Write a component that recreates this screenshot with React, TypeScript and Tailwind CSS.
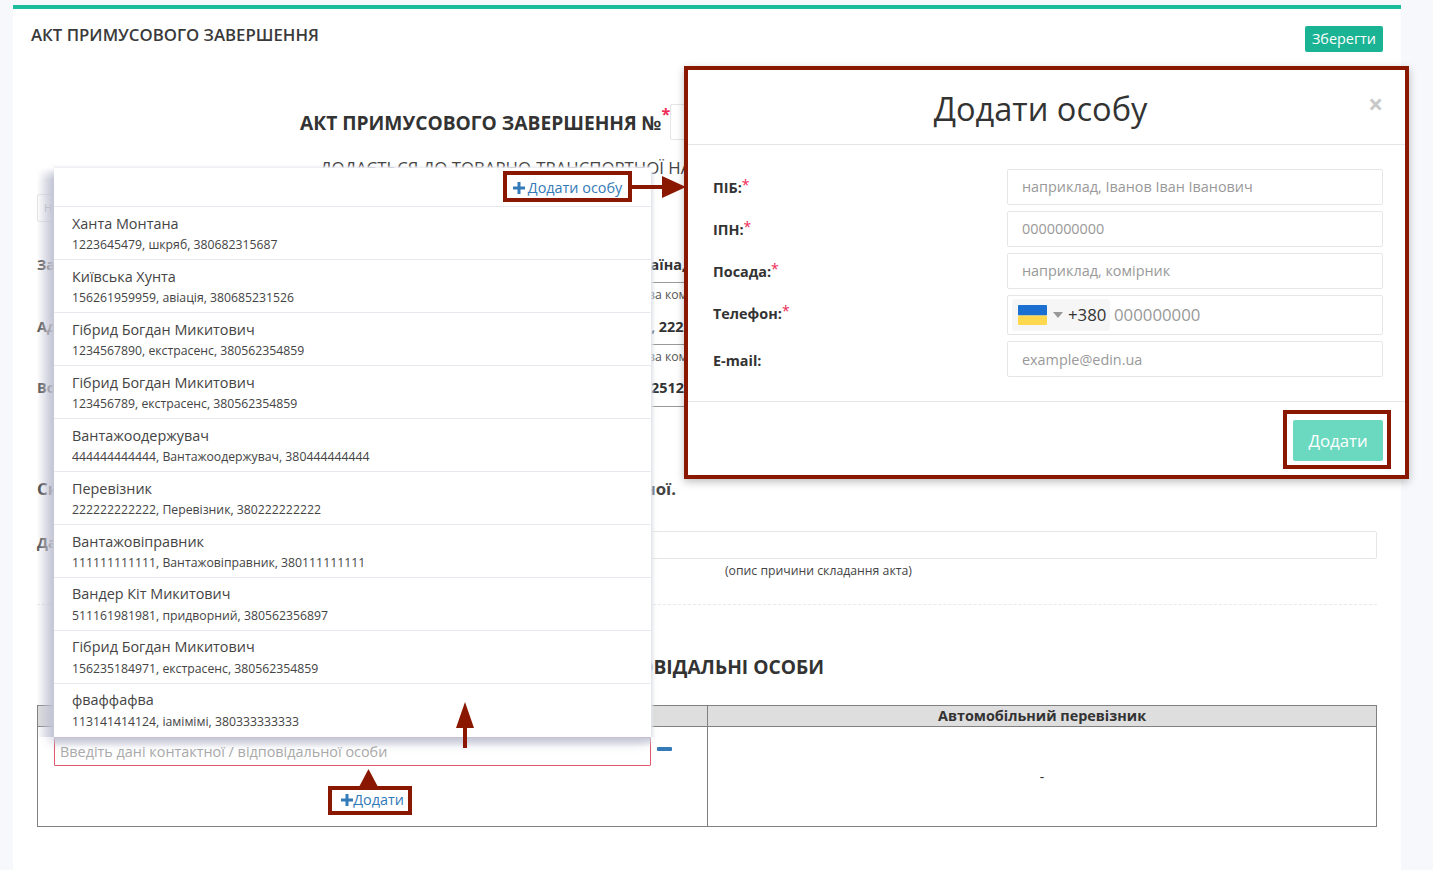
import React from "react";

const people = [
  ["Ханта Монтана", "1223645479, шкряб, 380682315687"],
  ["Київська Хунта", "156261959959, авіація, 380685231526"],
  ["Гібрид Богдан Микитович", "1234567890, екстрасенс, 380562354859"],
  ["Гібрид Богдан Микитович", "123456789, екстрасенс, 380562354859"],
  ["Вантажоодержувач", "444444444444, Вантажоодержувач, 380444444444"],
  ["Перевізник", "222222222222, Перевізник, 380222222222"],
  ["Вантажовіправник", "111111111111, Вантажовіправник, 380111111111"],
  ["Вандер Кіт Микитович", "511161981981, придворний, 380562356897"],
  ["Гібрид Богдан Микитович", "156235184971, екстрасенс, 380562354859"],
  ["фваффафва", "113141414124, іамімімі, 380333333333"],
];

function PlusIcon({ size = 12 }: { size?: number }) {
  return (
    <svg width={size} height={size} viewBox="0 0 12 12" className="shrink-0">
      <path d="M4.5 0h3v4.5H12v3H7.5V12h-3V7.5H0v-3h4.5z" fill="#337ab7" />
    </svg>
  );
}

function Star() {
  return <sup className="text-[#ed2a55] text-[14px] font-normal leading-none relative -top-[3px]">*</sup>;
}

function Field({ label, star, ph, h = "h-[36px]", mb = "mb-[6px]", labelPt = "pt-[9px]", textPad = "pb-[1px]" }: { label: string; star?: boolean; ph: string; h?: string; mb?: string; labelPt?: string; textPad?: string }) {
  return (
    <div className={`flex ${mb}`}>
      <div className={`w-[319px] pl-[25px] text-[14.4px] font-bold text-[#333] leading-[20px] ${labelPt}`}>
        {label}
        {star && <Star />}
      </div>
      <div className={`w-[376px] ${h} border border-[#e5e6e7] rounded-[2px] flex items-center pl-[14px] ${textPad} text-[14.4px] text-[#999]`}>{ph}</div>
    </div>
  );
}

export default function App() {
  return (
    <div className="relative h-[870px] overflow-hidden bg-[#f7f8fb] pl-[13px] pr-[32px] pt-[5px] text-[#333]" style={{ fontFamily: '"Open Sans", sans-serif' }}>
      {/* card */}
      <div className="h-[865px] bg-white border-t-4 border-[#1abc9c]">
        <div className="h-[57px] flex justify-between pl-[18px] pr-[18px]">
          <div className="pt-[15px] text-[16.8px] leading-[22px] font-semibold text-[#3a3a3a]">АКТ ПРИМУСОВОГО ЗАВЕРШЕННЯ</div>
          <div className="mt-[17px] h-[26px] w-[78px] bg-[#1ab394] rounded-[2px] text-white text-[14.4px] pb-[1px] flex items-center justify-center">Зберегти</div>
        </div>

        <div className="px-[24px]">
          <div className="h-[38px] mt-[38px] flex">
            <div className="pl-[263px] pt-[5px] text-[19.2px] leading-[27px] font-bold text-[#333] whitespace-nowrap">
              АКТ ПРИМУСОВОГО ЗАВЕРШЕННЯ №
            </div>
            <span className="text-[#ed2a55] text-[16px] leading-none font-bold pt-[2px]">*</span>
            <div className="w-[444px] h-[36px] border border-[#e5e6e7] rounded-[2px]" />
          </div>

          <div className="pl-[283px] mt-[14px] h-[24px] text-[16.8px] leading-[24px] whitespace-nowrap text-[#444]">ДОДАЄТЬСЯ ДО ТОВАРНО-ТРАНСПОРТНОЇ НАКЛАДНОЇ</div>

          <div className="mt-[14px] w-[300px] h-[28px] border border-[#e5e6e7] rounded-[2px] pl-[6px] text-[11px] leading-[26px] text-[#bbb]">Н</div>

          {/* party rows */}
          <div className="mt-[32px] flex h-[62px]">
            <div className="w-[360px] text-[14.4px] font-bold leading-[22px] text-[#555]">Замовник:</div>
            <div className="w-[620px] h-[61px]">
              <div className="h-[29px] border-b border-[#999] pl-[226px] text-[14.4px] font-bold leading-[22px] whitespace-nowrap overflow-hidden">Україна, Київ</div>
              <div className="pl-[252px] text-[12.25px] leading-[24px] text-[#555] whitespace-nowrap overflow-hidden">за комплектність</div>
            </div>
          </div>
          <div className="flex h-[61px]">
            <div className="w-[360px] text-[14.4px] font-bold leading-[22px] text-[#555]">Адреса:</div>
            <div className="w-[620px] h-[61px]">
              <div className="h-[29px] border-b border-[#999] pl-[254px] text-[14.4px] font-bold leading-[22px] whitespace-nowrap overflow-hidden">, 222222</div>
              <div className="pl-[252px] text-[12.25px] leading-[24px] text-[#555] whitespace-nowrap overflow-hidden">за комплектність</div>
            </div>
          </div>
          <div className="flex h-[100px]">
            <div className="w-[360px] text-[14.4px] font-bold leading-[22px] text-[#555]">Водій:</div>
            <div className="w-[620px] h-[30px] border-b border-[#999] pl-[254px] text-[14.4px] font-bold leading-[22px] whitespace-nowrap overflow-hidden">25122512</div>
          </div>

          <div className="w-[639px] h-[28px] flex justify-between text-[16.8px] font-bold leading-[24px] text-[#444] whitespace-nowrap">
            <div>Склад</div>
            <div>накладної.</div>
          </div>

          <div className="mt-[26px] flex h-[28px]">
            <div className="w-[360px] text-[14.4px] font-bold leading-[24px] text-[#555]">Дата:</div>
            <div className="flex-1 border border-[#e5e6e7] rounded-[2px]" />
          </div>
          <div className="pl-[688px] pt-[3px] text-[12.25px] leading-[18px] text-[#444]">(опис причини складання акта)</div>

          <div className="mt-[24px] border-t border-dashed border-[#e7eaec]" />

          <div className="mt-[48px] w-[787px] h-[27px] text-right text-[19.2px] leading-[27px] font-bold whitespace-nowrap overflow-hidden">ВІДПОВІДАЛЬНІ ОСОБИ</div>

          {/* table */}
          <div className="mt-[25px] w-[1340px] border border-[#808080] grid grid-cols-[670px_1fr]">
            <div className="h-[21px] bg-[#dedede] border-b border-[#808080] border-r" />
            <div className="h-[21px] bg-[#dedede] border-b border-[#808080] text-center text-[14.4px] font-bold leading-[20px]">Автомобільний перевізник</div>
            <div className="h-[99px] border-r border-[#808080] pl-[16px] pt-[10px]">
              <div className="flex">
                <div className="w-[597px] h-[29px] border border-[#e2576c] rounded-[1px] pl-[5px] text-[14.4px] leading-[28px] text-[#aaa] whitespace-nowrap">Введіть дані контактної / відповідальної особи</div>
                <div className="ml-[6px] mt-[10px] w-[15px] h-[4px] rounded-[1px] bg-[#337ab7]" />
              </div>
              <div className="mt-[20px] ml-[274px] w-[84px] h-[29px] border-4 border-[#8a1800] flex items-center justify-center pl-[5px] pb-[1px] text-[14.4px] text-[#337ab7]">
                <PlusIcon />
                Додати
              </div>
            </div>
            <div className="h-[99px] text-center text-[14px] pt-[38px] leading-[24px]">-</div>
          </div>
        </div>
      </div>

      {/* dropdown */}
      <div className="absolute left-[54px] top-[168px] w-[597px] h-[569px] bg-white shadow-[-4px_6px_10px_rgba(60,65,110,0.22)]">
        <div className="absolute -left-[17px] top-0 bottom-0 w-[17px] bg-linear-to-l from-[#c5c7d6] to-transparent [mask-image:linear-gradient(to_bottom,transparent,black_12px)]" />
        <div className="absolute left-0 top-full right-0 h-[10px] bg-linear-to-b from-[#c5c7d6] to-transparent" />
        <div className="absolute -right-[4px] top-[4px] bottom-0 w-[4px] bg-linear-to-r from-[#e4e5ec] to-transparent" />
        <div className="absolute left-0 bottom-full right-0 h-[3px] bg-linear-to-t from-[#eeeef3] to-transparent" />
        <div className="h-[39px] border-b border-[#e7e9ee] flex justify-end pt-[3px] pr-[19px]">
          <div className="w-[129px] h-[31px] border-4 border-[#8a1800] flex items-center justify-center gap-[3px] pt-[2px] text-[14.4px] text-[#337ab7]">
            <PlusIcon />
            Додати особу
          </div>
        </div>
        {people.map(([name, info], i) => (
          <div key={i} className={`h-[53px] pl-[18px] ${i >= 7 ? "pt-[6px]" : "pt-[7px]"} ${i < 9 ? "border-b border-[#e7e9ee]" : ""}`}>
            <div className="text-[14.4px] leading-[20px] text-[#444]">{name}</div>
            <div className={`text-[12.25px] leading-[20px] ${i >= 7 ? "pt-[2px]" : "pt-[1px]"} text-[#444]`}>{info}</div>
          </div>
        ))}
      </div>

      {/* modal */}
      <div className="absolute left-[684px] top-[66px] w-[725px] h-[413px] bg-white border-4 border-[#8a1800] shadow-[0_3px_8px_rgba(0,0,0,0.25)]">
        <div className="relative h-[75px] border-b border-[#e5e6e7] text-center text-[32.6px] font-medium leading-[41px] pt-[18px] pr-[12px] text-[#333]">
          Додати особу
          <span className="absolute right-[22px] top-[22px] text-[26px] leading-[24px] font-bold text-[#c8c8c8]">×</span>
        </div>
        <div className="h-[257px] pt-[24px] border-b border-[#e5e6e7]">
          <Field label="ПІБ:" star ph="наприклад, Іванов Іван Іванович" />
          <Field label="ІПН:" star ph="0000000000" />
          <Field label="Посада:" star ph="наприклад, комірник" />
          <div className="flex mb-[6px]">
            <div className="w-[319px] pl-[25px] pt-[9px] text-[14.4px] font-bold text-[#333] leading-[20px]">
              Телефон:
              <Star />
            </div>
            <div className="w-[376px] h-[40px] border border-[#e5e6e7] rounded-[2px] flex items-center pl-[4px]">
              <div className="w-[98px] h-[32px] bg-[#f6f6f6] rounded-[3px] flex items-center pl-[6px]">
                <svg width="29" height="20" viewBox="0 0 29 20" className="shrink-0">
                  <rect width="29" height="10.5" rx="1" fill="#1a6fd0" />
                  <rect y="10.5" width="29" height="9.5" rx="1" fill="#ffd84d" />
                </svg>
                <svg width="10" height="6" viewBox="0 0 10 6" className="ml-[6px] shrink-0">
                  <path d="M0 0h10L5 6z" fill="#999" />
                </svg>
                <span className="ml-[5px] text-[16.8px] text-[#333] leading-none">+380</span>
              </div>
              <span className="ml-[4px] text-[16.8px] text-[#999]">000000000</span>
            </div>
          </div>
          <Field label="E-mail:" ph="example@edin.ua" labelPt="pt-[10px]" mb="" textPad="pt-[1px]" />
        </div>
        <div className="flex justify-end pt-[8px] pr-[14px]">
          <div className="w-[108px] h-[59px] border-4 border-[#8a1800] pl-[6px] pt-[6px]">
            <div className="w-[90px] h-[41px] bg-[#6bd9c0] rounded-[2px] text-white text-[16.8px] flex items-center justify-center">Додати</div>
          </div>
        </div>
      </div>

      {/* arrows */}
      <svg className="absolute left-[630px] top-[176px]" width="58" height="22" viewBox="0 0 58 22">
        <path d="M2 9h30V0l24 11-24 11v-9H2z" fill="#8a1800" />
      </svg>
      <svg className="absolute left-[455px] top-[702px]" width="20" height="46" viewBox="0 0 20 46">
        <path d="M10 0l9 26h-7v20H8V26H1z" fill="#8a1800" />
      </svg>
      <svg className="absolute left-[359px] top-[769px]" width="19" height="18" viewBox="0 0 19 18">
        <path d="M9.5 0L19 18H0z" fill="#8a1800" />
      </svg>
    </div>
  );
}
